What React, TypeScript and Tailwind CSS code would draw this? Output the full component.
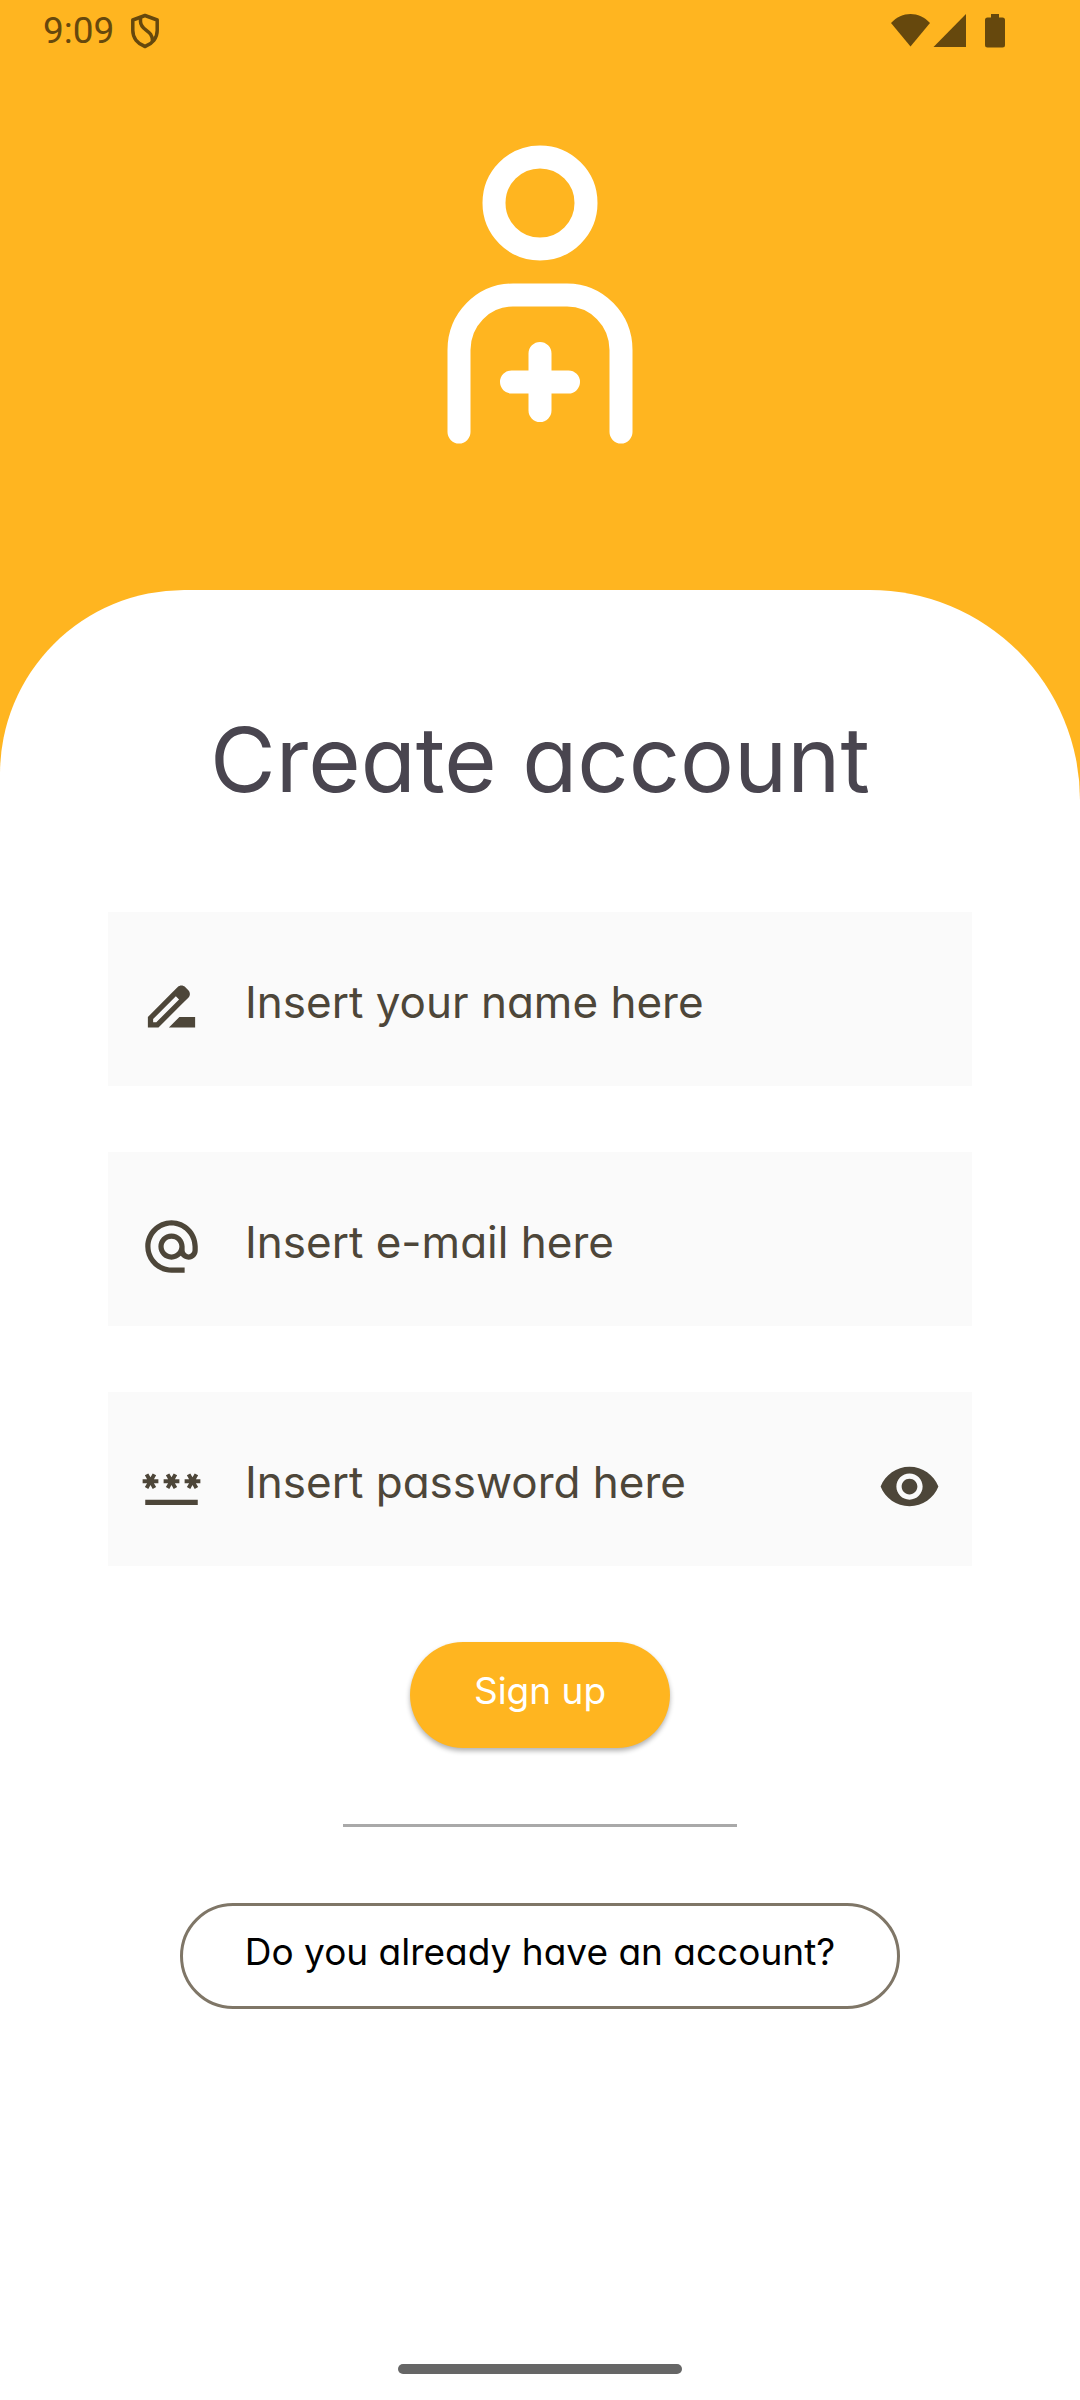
import { useState, type ReactNode } from "react";

function StatusBar() {
  return (
    <header className="flex h-[62px] items-center justify-between pl-[43px] pr-[75px] text-[#66480d]">
      <div className="flex items-center gap-4">
        <time className="font-['Roboto',sans-serif] text-[37px] leading-[62px]">9:09</time>
        <svg className="h-9 w-[30px]" viewBox="0 0 30 36" fill="none" stroke="currentColor" strokeWidth="3.500" strokeLinejoin="round" aria-hidden="true">
          <path d="M15 2.500 27.200 7v10.500c0 7.500-4.900 13.300-12.200 16C7.700 30.800 2.800 25 2.800 17.500V7z" />
          <path d="M10.500 4.500v4c0 9.500 12.500 8 12 20" />
        </svg>
      </div>
      <svg className="h-[34px] w-[114px]" viewBox="0 0 114 34" fill="currentColor" aria-hidden="true">
        <path d="M0 9C11-3 28-3 39 9L19.500 32.500z" />
        <path d="M42.500 33 75 0v33z" />
        <path d="M100 0h8v3.500h3.500A2.500 2.500 0 0 1 114 6v25a2.500 2.500 0 0 1-2.500 2.500h-15A2.500 2.500 0 0 1 94 31V6a2.500 2.500 0 0 1 2.500-2.500h3.500z" />
      </svg>
    </header>
  );
}

function PersonAddLogo() {
  return (
    <svg className="h-[300px] w-[186px]" viewBox="447 145 186 300" fill="none" stroke="white" strokeWidth="23" strokeLinecap="round" aria-hidden="true">
      <circle cx="540" cy="203" r="46" />
      <path d="M459 432v-82a54 55 0 0 1 54-55h54a54 55 0 0 1 54 55v82" />
      <path d="M540 353.500v57M511.500 382h57" />
    </svg>
  );
}

function Icon({ children }: { children: ReactNode }) {
  return (
    <svg className="size-[63px] shrink-0" viewBox="0 0 24 24" fill="currentColor" aria-hidden="true">
      {children}
    </svg>
  );
}

type FieldProps = {
  id: string;
  label: string;
  type: string;
  icon: ReactNode;
  trailing?: ReactNode;
};

function Field({ id, label, type, icon, trailing }: FieldProps) {
  return (
    <div className="flex h-[174px] items-center bg-[#fafafa] pl-8 pr-[31px] pt-[14px] text-[#4d4639]">
      <label htmlFor={id} aria-label={label}>
        <Icon>{icon}</Icon>
      </label>
      <input
        id={id}
        type={type}
        aria-label={label}
        placeholder={label}
        className="ml-[42px] h-20 min-w-0 flex-1 bg-transparent pb-2 text-[44px] outline-none placeholder:text-[#4d4639] placeholder:opacity-100"
      />
      {trailing}
    </div>
  );
}

export default function App() {
  const [visible, setVisible] = useState(false);

  return (
    <div className="flex min-h-screen flex-col bg-[#ffb520] font-['Inter',sans-serif] [font-feature-settings:'cv11']">
      <StatusBar />
      <div className="flex justify-center pb-[145px] pt-[83px]">
        <PersonAddLogo />
      </div>

      <main className="flex flex-1 flex-col items-center rounded-tl-[184px] rounded-tr-[210px] bg-white pt-[120px]">
        <h1 className="text-center text-[90px] leading-[100px] text-[#49454f]">Create account</h1>

        <form className="mt-[102px] flex w-4/5 flex-col items-center" onSubmit={(e) => e.preventDefault()}>
          <div className="flex w-full flex-col gap-[66px]">
            <Field
              id="name"
              label="Insert your name here"
              type="text"
              icon={
                <path d="M18.410 5.800 17.200 4.590c-.78-.78-2.050-.78-2.830 0l-2.680 2.680L3 15.960V20h4.040l8.740-8.740 2.630-2.630c.79-.78.79-2.050 0-2.830zM6.210 18H5v-1.210l8.660-8.660 1.210 1.210L6.210 18zM11 20l4-4h6v4H11z" />
              }
            />
            <Field
              id="email"
              label="Insert e-mail here"
              type="email"
              icon={
                <path d="M12 2C6.480 2 2 6.480 2 12s4.480 10 10 10h5v-2h-5c-4.340 0-8-3.660-8-8s3.660-8 8-8 8 3.660 8 8v1.430c0 .79-.71 1.570-1.500 1.570s-1.500-.78-1.500-1.570V12c0-2.760-2.240-5-5-5s-5 2.240-5 5 2.240 5 5 5c1.380 0 2.640-.56 3.540-1.470.65.89 1.770 1.470 2.960 1.470 1.970 0 3.500-1.600 3.500-3.570V12c0-5.520-4.480-10-10-10zm0 13c-1.660 0-3-1.340-3-3s1.340-3 3-3 3 1.340 3 3-1.340 3-3 3z" />
              }
            />
            <Field
              id="password"
              label="Insert password here"
              type={visible ? "text" : "password"}
              icon={
                <path d="M2 17h20v2H2v-2zm1.150-4.050L4 11.470l.85 1.480 1.300-.75-.85-1.480H7v-1.500H5.300l.85-1.470L4.850 7 4 8.470 3.150 7l-1.300.75.85 1.470H1v1.500h1.700l-.85 1.480 1.300.75zm6.700-.75 1.300.75.85-1.480.85 1.480 1.300-.75-.85-1.480H15v-1.500h-1.700l.85-1.470-1.300-.75L12 8.470 11.150 7l-1.300.75.85 1.470H9v1.500h1.700l-.85 1.480zM23 9.220h-1.700l.85-1.470-1.300-.75L20 8.470 19.150 7l-1.300.75.85 1.470H17v1.500h1.700l-.85 1.480 1.300.75.85-1.480.85 1.480 1.300-.75-.85-1.480H23v-1.500z" />
              }
              trailing={
                <button type="button" aria-label="Show password" aria-pressed={visible} onClick={() => setVisible(!visible)}>
                  <Icon>
                    <path d="M12 4.500C7 4.500 2.730 7.610 1 12c1.730 4.390 6 7.500 11 7.500s9.270-3.110 11-7.500c-1.730-4.390-6-7.500-11-7.500zM12 17c-2.760 0-5-2.240-5-5s2.240-5 5-5 5 2.240 5 5-2.240 5-5 5zm0-8c-1.660 0-3 1.340-3 3s1.340 3 3 3 3-1.340 3-3-1.340-3-3-3z" />
                  </Icon>
                </button>
              }
            />
          </div>

          <button type="submit" className="mt-[76px] h-[106px] rounded-full bg-[#ffb520] px-16 pb-2 text-[37px] text-white shadow-[0_3px_5px_rgba(0,0,0,0.3)]">
            Sign up
          </button>
        </form>

        <hr className="mt-[76px] w-[394px] border-t-[3px] border-[#a9a9a9]" />

        <button type="button" className="mt-[76px] h-[106px] rounded-full border-[3px] border-[#7f7667] px-[62px] pb-2 text-[37px] text-black">
          Do you already have an account?
        </button>

        <div className="mt-auto pb-[26px] pt-16">
          <div className="h-[10px] w-[284px] rounded-full bg-[#666666]" />
        </div>
      </main>
    </div>
  );
}
